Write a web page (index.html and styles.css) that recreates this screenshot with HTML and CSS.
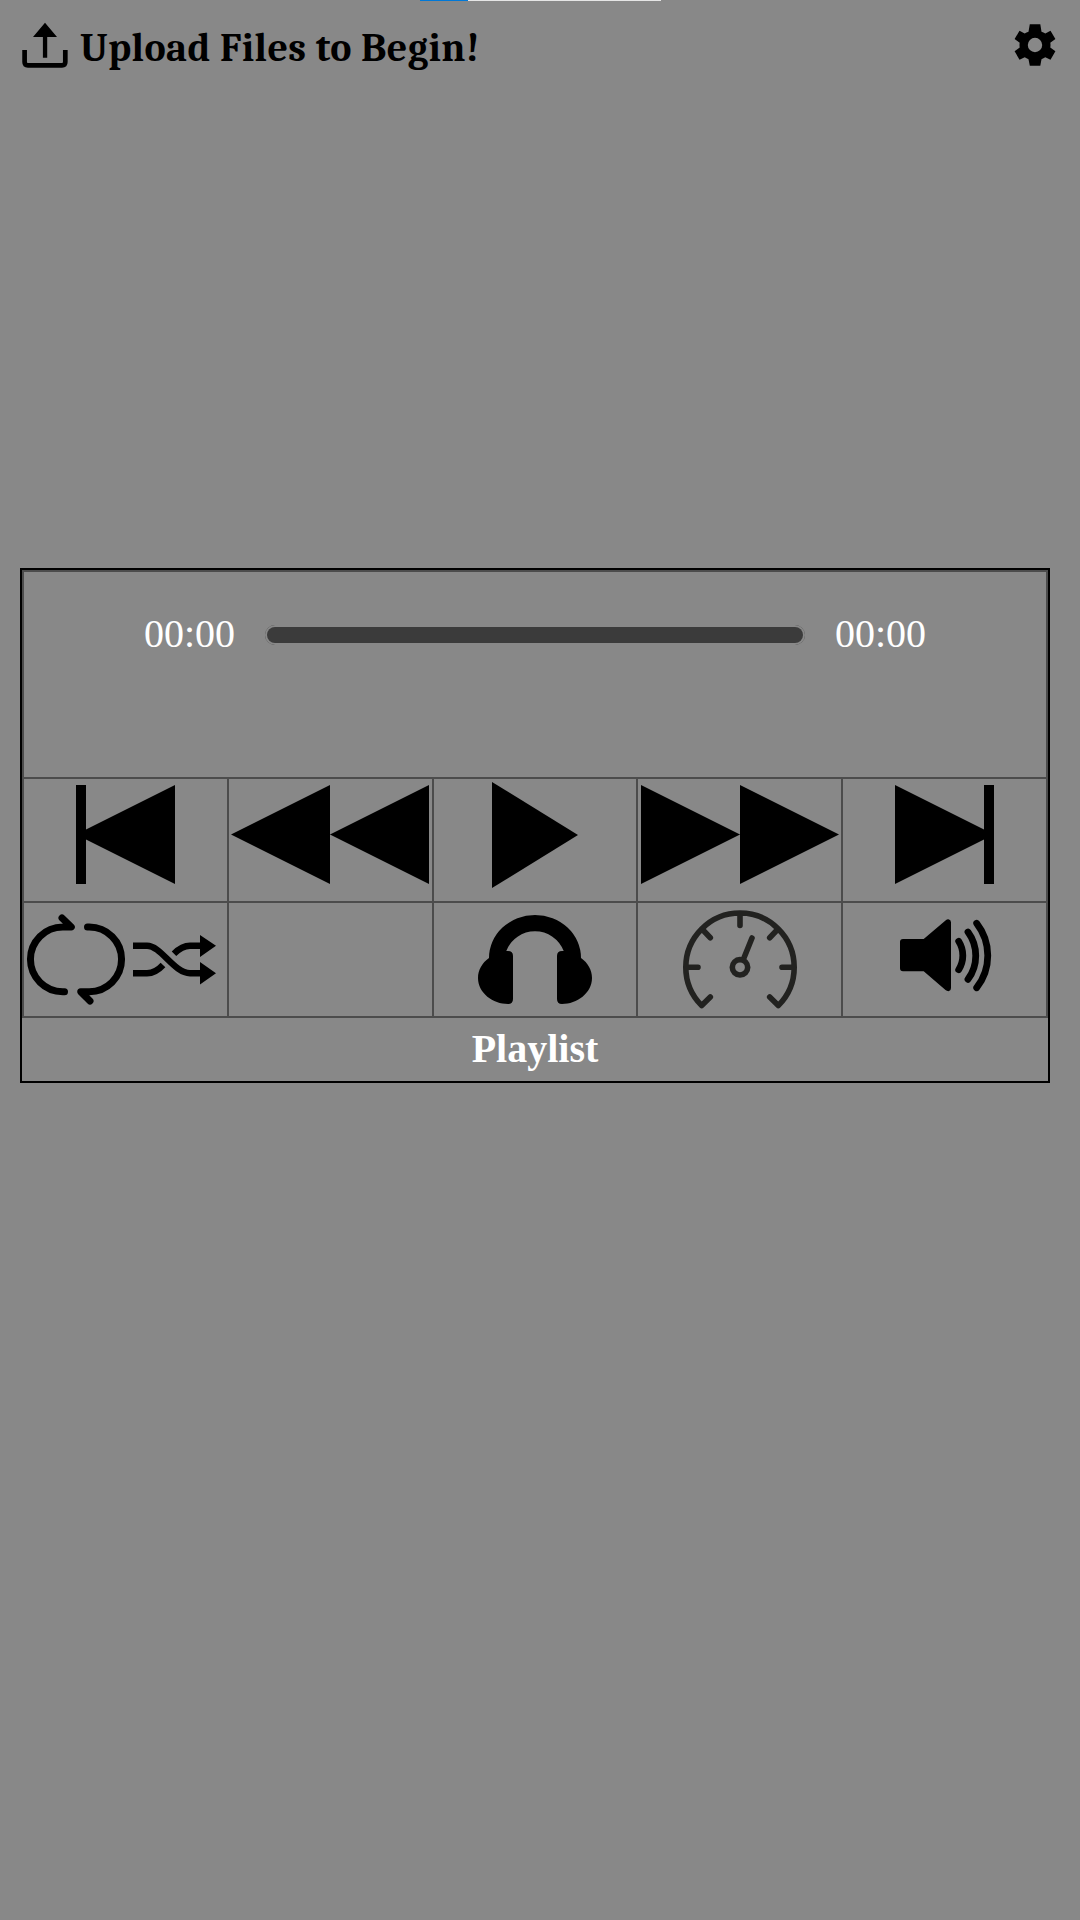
FILE: index.html
```html
<!DOCTYPE html>
<html lang="en">
<head>
<meta charset="utf-8">
<title>Audio Player</title>
<link rel="stylesheet" href="styles.css">
</head>
<body>
<div class="loading"><div class="loading-value"></div></div>
<header class="header">
  <svg class="upload-icon" viewBox="22 22 46 46"><path d="M24.6 50V62Q24.6 65.3 27.9 65.3H62Q65.3 65.3 65.3 62V50" fill="none" stroke="#000" stroke-width="4.7"/><path d="M45 22.7L57 37H47.2V57.7H42.9V37H33Z"/></svg>
  <h1 class="title">Upload Files to Begin!</h1>
  <svg class="settings-icon" viewBox="1014 24 42 42"><path fill-rule="evenodd" d="M1029.8 24.3H1040.3L1041.5 31.8Q1043.5 32.3 1045.3 33.5L1050.5 30.8L1055.4 39L1050.3 42.8Q1050.7 45 1050.3 47.4L1055.4 51.2L1050.5 59.7L1045.3 57.3Q1043.5 58.5 1041.5 59.2L1040.3 65.8H1029.8L1028.5 59.2Q1026.5 58.5 1024.7 57.3L1019.5 59.7L1014.6 51.2L1019.7 47.4Q1019.3 45 1019.7 42.8L1014.6 39L1019.5 30.8L1024.7 33.5Q1026.5 32.3 1028.5 31.8ZM1035 37.8A7.2 7.2 0 1 0 1035 52.2A7.2 7.2 0 1 0 1035 37.8Z"/></svg>
</header>
<main class="player">
  <div class="controls">
    <div class="timeline"><span class="time">00:00</span><div class="track"><div class="track-cover"><div class="track-bar"></div></div></div><span class="time">00:00</span></div>
    <div class="cell"><svg viewBox="24 779 203 122"><path d="M76 785H86V829.5L175 785V884L86 839.5V884H76Z"/></svg></div>
    <div class="cell"><svg viewBox="229 779 203 122"><path d="M231 834.5L330 785V884ZM330 834.5L429 785V884Z"/></svg></div>
    <div class="cell"><svg viewBox="434 779 202 122"><path d="M492 782L578 835L492 888Z"/></svg></div>
    <div class="cell"><svg viewBox="638 779 203 122"><path d="M641 785L740 834.5L641 884ZM740 785L839 834.5L740 884Z"/></svg></div>
    <div class="cell"><svg viewBox="843 779 203 122"><path d="M895 785L984 829.5V785H994V884H984V839.5L895 884Z"/></svg></div>
    <div class="cell"><svg viewBox="24 903 203 113">
      <g class="line loop"><path d="M62 918L71.3 927H62.8A32.3 32.3 0 0 0 62.8 991.7H64.5"/><path d="M87.5 927H89.2A32.3 32.3 0 0 1 89.2 991.7H80.7L90 1001"/></g>
      <g class="line shuffle"><path d="M133 945.7H147C161 945.7 174 973.2 190 973.2H201"/><path d="M133 973.2H147Q155.5 973.2 163 965"/><path d="M174 953.7Q182 945.7 190 945.7H201"/></g>
      <path d="M200 935L216 945.7L200 957ZM200 962L216 973.2L200 984.5Z"/></svg></div>
    <div class="cell"></div>
    <div class="cell"><svg viewBox="434 903 202 113"><path d="M489 958A46 43 0 0 1 581 958C588 963 592 970 592 978C592 993 577 1004 562 1004Q557 1004 557 999V956Q557 951 562 951H563.7A30.7 30.7 0 0 0 506.3 951H508Q513 951 513 956V999Q513 1004 508 1004C493 1004 478 993 478 978C478 970 482 963 489 958Z"/></svg></div>
    <div class="cell"><svg viewBox="638 903 203 113"><g class="line gauge"><path d="M710.3 997L701.7 1005.6A54.2 54.2 0 1 1 778.3 1005.6L769.7 997M686 967.3H698M782 967.3H794M740 914V925.5M702 929L710.3 937.7M778 929L769.7 937.7M743.5 959L752 938"/><circle cx="740" cy="967.3" r="7.7"/></g></svg></div>
    <div class="cell"><svg viewBox="843 903 203 113"><path d="M903 939H923.7L945.5 920.4Q947.5 919 949 919.5Q951 920 951 922.5V988Q951 990.5 949 991Q947.5 991.5 945.5 990L923.7 971.3H903Q900 971.3 900 968.3V942Q900 939 903 939Z"/><path class="line sound" d="M958.7 941.3A26.6 26.6 0 0 1 958.7 969.7M968 932A40 40 0 0 1 968 979.3M976.7 923.3A52.4 52.4 0 0 1 976.7 987.7"/></svg></div>
  </div>
  <h2 class="playlist">Playlist</h2>
</main>
</body>
</html>
```
FILE: styles.css
```css
* { box-sizing: border-box; }
html { background: #888; }
body { margin: 0; height: 1920px; background: #888; font-family: "Liberation Serif", "Times New Roman", serif; overflow: hidden; }
svg { display: block; }
h1, h2 { margin: 0; line-height: 46px; }
.loading { width: 241px; height: 1px; margin-left: 420px; background: #e5e5e5; }
.loading-value { width: 48px; height: 1px; background: #0078d7; }
.header { display: flex; align-items: flex-start; height: 567px; padding: 21px 24px 0 22px; }
.upload-icon { width: 46px; height: 46px; flex: none; }
.title { margin: 3px auto 0 12px; font-family: Cambria, Caladea, "Liberation Serif", serif; font-size: 40px; letter-spacing: 0.43px; white-space: nowrap; color: #000; }
.settings-icon { width: 42px; height: 42px; margin-top: 2px; flex: none; }
.player { width: 1030px; height: 515px; margin-left: 20px; border: 2px solid #000; }
.controls { display: grid; grid-template-columns: 203px 203px 202px 203px 203px; grid-template-rows: 205px 122px 113px; gap: 2px; padding: 2px; background: #4c4c4c; }
.timeline { grid-column: 1 / -1; display: flex; align-items: flex-start; justify-content: center; gap: 30px; padding-top: 39px; background: #888; }
.time { color: #fff; font-size: 40px; line-height: 46px; }
.track { width: 540px; height: 20px; margin-top: 14px; border-radius: 10px; background: #3b3b3b; }
.track-cover { height: 20px; padding: 2px; border-radius: 10px; background: #888; }
.track-bar { height: 16px; border-radius: 8px; background: #3b3b3b; }
.cell { background: #888; overflow: hidden; }
.cell svg { width: 100%; height: 100%; }
.line { fill: none; stroke: #000; }
.loop { stroke-width: 7; stroke-linecap: round; stroke-linejoin: round; }
.shuffle { stroke-width: 6.4; }
.gauge { stroke: #222220; stroke-width: 5.6; stroke-linecap: round; stroke-linejoin: round; }
.sound { stroke-width: 6.8; stroke-linecap: round; }
.playlist { padding-top: 8px; text-align: center; color: #fff; font-size: 40px; }
```
